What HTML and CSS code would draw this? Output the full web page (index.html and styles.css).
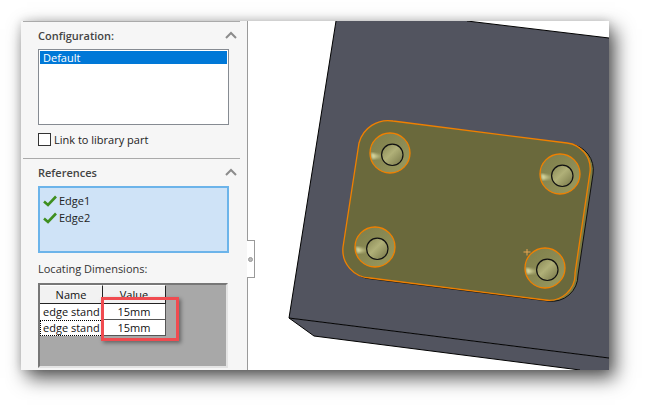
FILE: index.html
```html
<!DOCTYPE html>
<html lang="en">
<head>
<meta charset="utf-8">
<title>Configuration</title>
<link rel="stylesheet" href="styles.css">
</head>
<body>
<div class="window">
  <aside class="panel">
    <section class="section">
      <header class="section-head">
        <h2 class="title">Configuration:</h2>
        <svg class="chevron" width="12" height="8" viewBox="0 0 12 8"><path d="M1 7 L6 2 L11 7" fill="none" stroke="#8c8c8c" stroke-width="2"/></svg>
      </header>
      <div class="listbox"><div class="list-item">Default</div></div>
      <label class="check-row"><span class="checkbox"></span><span>Link to library part</span></label>
    </section>
    <section class="section">
      <header class="section-head">
        <h2 class="title">References</h2>
        <svg class="chevron" width="12" height="8" viewBox="0 0 12 8"><path d="M1 7 L6 2 L11 7" fill="none" stroke="#8c8c8c" stroke-width="2"/></svg>
      </header>
      <div class="refs">
        <div class="ref"><svg width="14" height="12" viewBox="0 0 14 12"><path d="M1 6.5 L5 10 L13 1.500" fill="none" stroke="#3f8f1f" stroke-width="2.600"/></svg><span>Edge1</span></div>
        <div class="ref"><svg width="14" height="12" viewBox="0 0 14 12"><path d="M1 6.5 L5 10 L13 1.500" fill="none" stroke="#3f8f1f" stroke-width="2.600"/></svg><span>Edge2</span></div>
      </div>
      <div class="sub-label">Locating Dimensions:</div>
      <div class="grid-wrap">
        <div class="grid">
          <div class="cell head">Name</div><div class="cell head">Value</div>
          <div class="cell name">edge stand</div><div class="cell value">15mm</div>
          <div class="cell name focus">edge stand</div><div class="cell value">15mm</div>
        </div>
      </div>
    </section>
    <div class="callout"></div>
  </aside>
  <div class="splitter"><div class="tab"><span class="dot"></span></div></div>
  <main class="view">
    <svg class="scene" width="361" height="349" viewBox="248 21 361 349">
      <defs>
        <linearGradient id="cone" x1="0" y1="0" x2="1" y2="1">
          <stop offset="0" stop-color="#7e7e4a"/><stop offset="0.5" stop-color="#8a8a54"/><stop offset="1" stop-color="#9c9c60"/>
        </linearGradient>
        <linearGradient id="wedge" x1="0" y1="0" x2="1" y2="0">
          <stop offset="0" stop-color="#f2f2bc"/><stop offset="1" stop-color="#b8b87c" stop-opacity=".2"/>
        </linearGradient>
        <linearGradient id="bore" x1="0" y1="0" x2="1" y2="1">
          <stop offset="0" stop-color="#85855200"/><stop offset="0" stop-color="#858552"/><stop offset="0.45" stop-color="#b0b078"/><stop offset="1" stop-color="#747446"/>
        </linearGradient>
        <filter id="soft"><feGaussianBlur stdDeviation="1"/></filter>
        <g id="hole">
          <circle r="20" fill="url(#cone)"/>
          <path d="M-19 0 L-7 2 L-7 5 L-18 6 Z" fill="url(#wedge)" filter="url(#soft)"/>
          <circle r="20" fill="none" stroke="#f08000" stroke-width="1.300"/>
          <circle cx="2.300" cy="1.800" r="10.700" fill="url(#bore)" stroke="#111" stroke-width="1.200"/>
        </g>
      </defs>
      <path d="M336 21 L467 21 L609 38 L609 358 L289 318 Z" fill="#52545f"/>
      <path d="M289 318 L314 336 L580 370 L609 370 L609 358 Z" fill="#52545f"/>
      <path d="M336 21 L289 318 L609 358 M467 21 L609 38 M289 318 L314 336 L580 370" fill="none" stroke="#000" stroke-width="1"/>
      <path d="M396 122 L570 144 A26 26 0 0 1 593 174 L578 275 A26 26 0 0 1 548 301 L372 279 A28 28 0 0 1 345 248 L361 144 A30 30 0 0 1 396 122 Z" fill="#7c7c44" stroke="#111" stroke-width="1"/>
      <path d="M393 121 L567 143 A26 26 0 0 1 590 172 L575 273 A26 26 0 0 1 545 300 L370 278 A28 28 0 0 1 343 247 L359 143 A30 30 0 0 1 393 121 Z" fill="#6a693c" stroke="#f08000" stroke-width="1.300"/>
      <use href="#hole" x="390" y="153"/>
      <use href="#hole" x="560" y="174"/>
      <use href="#hole" x="375" y="247"/>
      <use href="#hole" x="545" y="268"/>
      <path d="M527 249 V255.500 M523.500 252 H530.500" stroke="#e9a650" stroke-width="1" fill="none"/>
    </svg>
  </main>
</div>
</body>
</html>
```
FILE: styles.css
```css
html, body { margin: 0; padding: 0; background: #fff; }
body { width: 651px; height: 412px; overflow: hidden; font-family: "Open Sans", "Noto Sans", sans-serif; font-size: 11px; color: #222; }
.window { position: relative; display: flex; width: 588px; height: 349px; margin: 21px 0 0 21px; background: #fff; box-shadow: 6px 8px 18px rgba(0,0,0,.68), 0 0 9px rgba(0,0,0,.14); }
.panel { position: relative; width: 226px; height: 349px; background: #f6f6f6; overflow: hidden; flex: none; }
.section { width: 202px; margin-left: 2px; padding-left: 15px; border-top: 1px solid #aaa; }
.section-head { display: flex; justify-content: space-between; align-items: center; height: 27px; padding: 0 3px 1px 0; box-sizing: border-box; }
.title { margin: 0; font-size: 11px; font-weight: 600; color: #444; }
.listbox { width: 191px; height: 76px; box-sizing: border-box; border: 1px solid #868b92; background: #fff; padding: 1px; }
.list-item { height: 13px; line-height: 13px; background: #0078d7; color: #fff; padding-left: 3px; }
.check-row { display: flex; align-items: center; gap: 3px; height: 13px; margin: 8px 0 12px; }
.checkbox { width: 13px; height: 13px; box-sizing: border-box; border: 1px solid #333; background: #fff; }
.refs { width: 191px; height: 67px; box-sizing: border-box; border: 2px solid #6cb4ea; background: #cfe3f7; padding: 4px 0 0 3px; }
.ref { display: flex; align-items: center; gap: 2px; height: 17px; }
.sub-label { height: 30px; line-height: 32px; color: #333; }
.grid-wrap { width: 190px; height: 85px; box-sizing: border-box; background: #a8a8a8; border: 2px solid #e4e4e4; border-top-color: #777; border-left-color: #777; }
.grid { display: grid; grid-template-columns: 63px 63px; grid-template-rows: 19px 16px 16px; width: 126px; }
.cell { box-sizing: border-box; overflow: hidden; white-space: nowrap; border-right: 1px solid #555; border-bottom: 1px solid #555; background: #fff; line-height: 15px; color: #111; }
.head { background: #f2f2f2; text-align: center; line-height: 18px; border-top: 1px solid #fff; border-bottom-color: #222; border-right-color: #222; }
.name { padding-left: 3px; border-right-color: #fff; border-bottom-color: #fff; }
.focus { outline: 1px dotted #000; outline-offset: -1px; }
.value { text-align: center; }
.callout { position: absolute; left: 80px; top: 276px; width: 78px; height: 44px; box-sizing: border-box; border: 3px solid #f04b50; box-shadow: 2px 2px 4px rgba(0,0,0,.4); }
.splitter { width: 1px; flex: none; background: #9a9a9a; position: relative; }
.tab { position: absolute; left: 0; top: 219px; width: 8px; height: 38px; box-sizing: border-box; background: #fff; border: 1px solid #9a9a9a; border-left: 0; display: flex; align-items: center; justify-content: flex-start; padding-left: 1px; }
.dot { width: 5px; height: 5px; border-radius: 50%; background: #bbb; border: 1px solid #999; box-sizing: border-box; }
.view { flex: 1; overflow: hidden; }
.scene { display: block; }
```
